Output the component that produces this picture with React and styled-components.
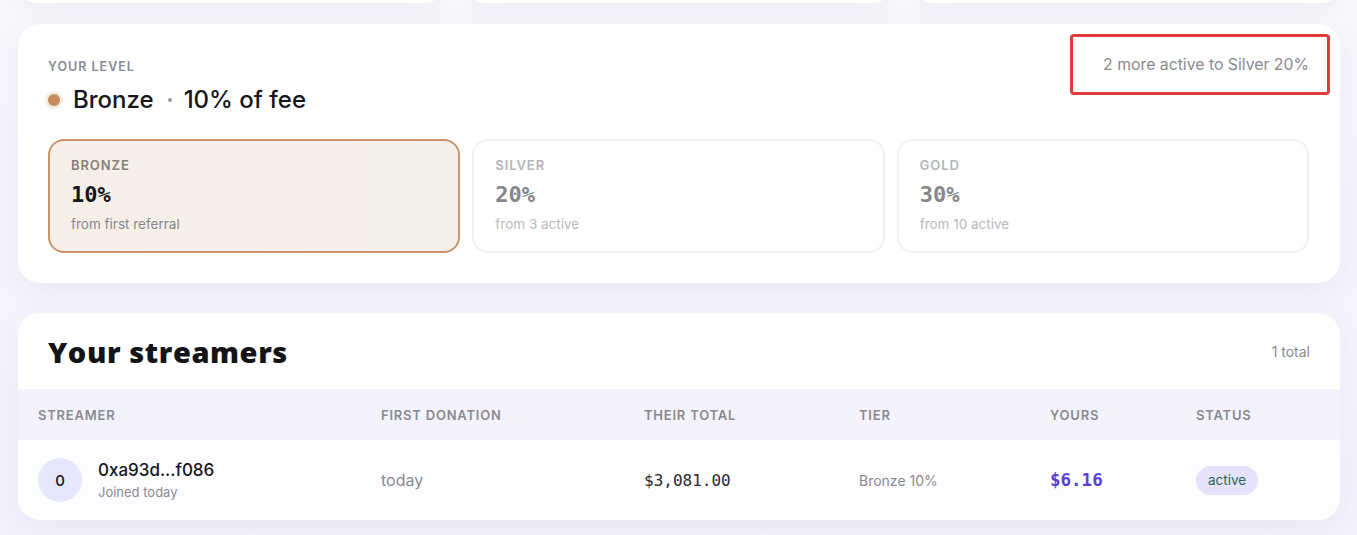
import styled, { createGlobalStyle } from "styled-components";

const GlobalStyle = createGlobalStyle`
  * { box-sizing: border-box; }
  body {
    margin: 0;
    background: linear-gradient(180deg, #f7f7fc 0%, #f3f3fd 100%);
    font-family: Inter, "Noto Sans", sans-serif;
    color: #16161d;
    overflow: hidden;
  }
`;

const Page = styled.div`
  width: 1357px;
  height: 535px;
  padding: 0 17px 0 18px;
  display: flex;
  flex-direction: column;
`;

const TopRow = styled.div`
  height: 3px;
  display: grid;
  grid-template-columns: repeat(3, 1fr);
  gap: 24px;
  margin-bottom: 21px;
`;

const StatCard = styled.div`
  height: 60px;
  margin-top: -57px;
  background: #fff;
  border-radius: 18px;
  box-shadow: 0 6px 18px rgba(90, 90, 160, 0.06);
`;

const Card = styled.section`
  background: #fff;
  border-radius: 22px;
  box-shadow: 0 8px 30px rgba(90, 90, 160, 0.07);
`;

const LevelCard = styled(Card)`
  padding: 35px 31px 30px 30px;
  margin-bottom: 30px;
`;

const LevelHead = styled.div`
  display: flex;
  justify-content: space-between;
  align-items: flex-start;
  height: 56px;
`;

const Eyebrow = styled.div`
  font-size: 12.5px;
  font-weight: 600;
  letter-spacing: 0.08em;
  color: #8a8a8f;
  line-height: 16px;
`;

const LevelTitle = styled.div`
  margin-top: 10px;
  display: flex;
  align-items: center;
  font-size: 24px;
  font-weight: 500;
  line-height: 30px;
  color: #16161d;
`;

const Dot = styled.span`
  width: 12px;
  height: 12px;
  border-radius: 50%;
  background: #c48e5e;
  box-shadow: 0 0 0 3px #f7ebe1;
  margin: 0 13px 0 0;
`;

const Sep = styled.span`
  width: 4px;
  height: 4px;
  border-radius: 50%;
  background: #9a9aa0;
  margin: 0 12px 0 14px;
`;

const NextHint = styled.div`
  margin: -25px -21px 0 0;
  height: 61px;
  padding: 0 18px 0 30px;
  display: flex;
  align-items: center;
  border: 3px solid #e23b3b;
  border-radius: 4px;
  font-size: 15.8px;
  color: #8a8a8f;
`;

const TierGrid = styled.div`
  margin-top: 24px;
  display: grid;
  grid-template-columns: repeat(3, 1fr);
  gap: 12px;
`;

const Tier = styled.div`
  height: 114px;
  padding: 16px 21px;
  border-radius: 16px;
  border: 2px solid ${({ active }) => (active ? "#c8956a" : "#f1f1f4")};
  background: ${({ active }) =>
    active ? "linear-gradient(90deg, #f7efe7 0%, #f5f0ea 100%)" : "#fff"};
`;

const TierName = styled.div`
  font-size: 13px;
  font-weight: 600;
  letter-spacing: 0.07em;
  line-height: 16px;
  color: ${({ active }) => (active ? "#86807a" : "#b4b4b8")};
`;

const TierPct = styled.div`
  margin-top: 7px;
  font-family: "DejaVu Sans Mono", "Liberation Mono", monospace;
  font-size: 22px;
  font-weight: 700;
  line-height: 30px;
  color: ${({ active }) => (active ? "#16161d" : "#85858a")};
`;

const TierNote = styled.div`
  margin-top: 5px;
  font-size: 13.5px;
  line-height: 18px;
  color: ${({ active }) => (active ? "#87878c" : "#b8b8bc")};
`;

const StreamersCard = styled(Card)`
  overflow: hidden;
`;

const StreamersHead = styled.div`
  height: 76px;
  padding: 0 30px 0 30px;
  display: flex;
  justify-content: space-between;
  align-items: center;
`;

const Title = styled.h2`
  margin: 0;
  font-family: "Open Sans", "DejaVu Sans", sans-serif;
  font-size: 29px;
  font-weight: 800;
  letter-spacing: 0.02em;
  color: #141418;
`;

const Count = styled.span`
  font-size: 14px;
  color: #8a8a8f;
`;

const cols = "343px 263px 215px 191px 146px 1fr";

const HeadRow = styled.div`
  display: grid;
  grid-template-columns: ${cols};
  height: 51px;
  align-items: center;
  background: #f4f3fd;
`;

const HeadCell = styled.div`
  padding-left: 20px;
  font-size: 13px;
  font-weight: 600;
  letter-spacing: 0.06em;
  color: #8a8a8f;
`;

const Row = styled.div`
  display: grid;
  grid-template-columns: ${cols};
  height: 80px;
  align-items: center;
  background: #fdfdff;
`;

const Cell = styled.div`
  padding-left: 20px;
  display: flex;
  align-items: center;
  font-size: ${({ size }) => size || 16}px;
  color: ${({ color }) => color || "#8a8a8f"};
  font-family: ${({ mono }) =>
    mono ? '"DejaVu Sans Mono", "Liberation Mono", monospace' : "inherit"};
  font-weight: ${({ bold }) => (bold ? 700 : 400)};
`;

const Avatar = styled.div`
  width: 44px;
  height: 44px;
  border-radius: 50%;
  background: #e6e6fc;
  display: flex;
  align-items: center;
  justify-content: center;
  font-size: 15px;
  font-weight: 500;
  color: #16161d;
  margin-right: 16px;
`;

const Who = styled.div`
  display: flex;
  flex-direction: column;
  gap: 4px;
`;

const Addr = styled.div`
  font-size: 17px;
  font-weight: 500;
  color: #16161d;
`;

const Joined = styled.div`
  font-size: 13px;
  color: #8a8a8f;
`;

const Pill = styled.span`
  padding: 6px 12px;
  border-radius: 15px;
  background: #e4e3fb;
  color: #2c6555;
  font-size: 13.5px;
  line-height: 17px;
`;

const tiers = [
  { name: "BRONZE", pct: "10%", note: "from first referral", active: true },
  { name: "SILVER", pct: "20%", note: "from 3 active" },
  { name: "GOLD", pct: "30%", note: "from 10 active" },
];

const heads = ["STREAMER", "FIRST DONATION", "THEIR TOTAL", "TIER", "YOURS", "STATUS"];

export default function App() {
  return (
    <>
      <GlobalStyle />
      <Page>
        <TopRow>
          <StatCard />
          <StatCard />
          <StatCard />
        </TopRow>

        <LevelCard>
          <LevelHead>
            <div>
              <Eyebrow>YOUR LEVEL</Eyebrow>
              <LevelTitle>
                <Dot />
                Bronze
                <Sep />
                10% of fee
              </LevelTitle>
            </div>
            <NextHint>2 more active to Silver 20%</NextHint>
          </LevelHead>
          <TierGrid>
            {tiers.map((t) => (
              <Tier key={t.name} active={t.active}>
                <TierName active={t.active}>{t.name}</TierName>
                <TierPct active={t.active}>{t.pct}</TierPct>
                <TierNote active={t.active}>{t.note}</TierNote>
              </Tier>
            ))}
          </TierGrid>
        </LevelCard>

        <StreamersCard>
          <StreamersHead>
            <Title>Your streamers</Title>
            <Count>1 total</Count>
          </StreamersHead>
          <HeadRow>
            {heads.map((h) => (
              <HeadCell key={h}>{h}</HeadCell>
            ))}
          </HeadRow>
          <Row>
            <Cell>
              <Avatar>0</Avatar>
              <Who>
                <Addr>0xa93d...f086</Addr>
                <Joined>Joined today</Joined>
              </Who>
            </Cell>
            <Cell>today</Cell>
            <Cell mono color="#2a2a30">
              $3,081.00
            </Cell>
            <Cell size={14}>Bronze 10%</Cell>
            <Cell mono bold color="#5a3fd8" size={17.5}>
              $6.16
            </Cell>
            <Cell>
              <Pill>active</Pill>
            </Cell>
          </Row>
        </StreamersCard>
      </Page>
    </>
  );
}
